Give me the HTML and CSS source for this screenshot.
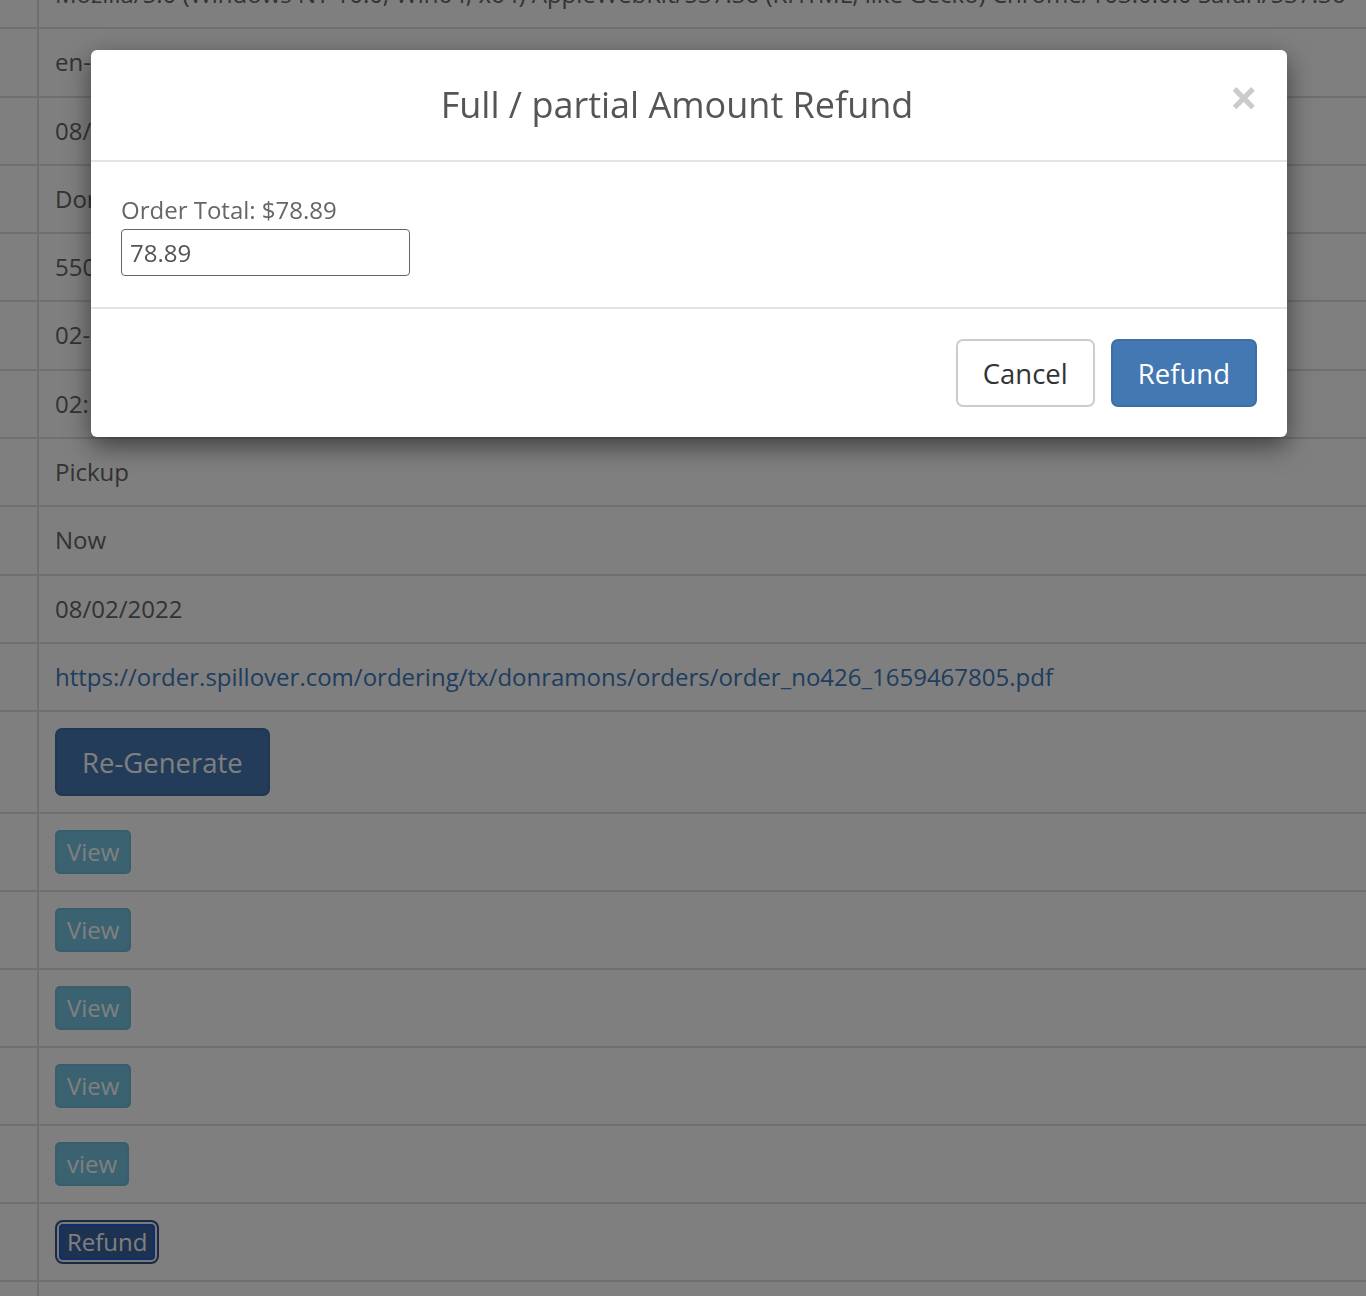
FILE: index.html
```html
<!DOCTYPE html>
<html lang="en">
  <head>
    <meta charset="UTF-8" />
    <meta name="viewport" content="width=device-width, initial-scale=1.0" />
    <title>Order Details</title>
    <link rel="stylesheet" href="styles.css">
  </head>
  <body>
    <div class="details">
      <div class="row"><div class="key"></div><div class="val nowrap">Mozilla/5.0 (Windows NT 10.0; Win64; x64) AppleWebKit/537.36 (KHTML, like Gecko) Chrome/103.0.0.0 Safari/537.36</div></div>
      <div class="row"><div class="key"></div><div class="val">en-US</div></div>
      <div class="row"><div class="key"></div><div class="val">08/02/2022 02:16 PM</div></div>
      <div class="row"><div class="key"></div><div class="val">Don Ramon's Mexican Restaurant</div></div>
      <div class="row"><div class="key"></div><div class="val">5501 Main St</div></div>
      <div class="row"><div class="key"></div><div class="val">02-08-2022</div></div>
      <div class="row"><div class="key"></div><div class="val">02:16 PM</div></div>
      <div class="row"><div class="key"></div><div class="val">Pickup</div></div>
      <div class="row"><div class="key"></div><div class="val">Now</div></div>
      <div class="row"><div class="key"></div><div class="val">08/02/2022</div></div>
      <div class="row"><div class="key"></div><div class="val"><a href="#">https://order.spillover.com/ordering/tx/donramons/orders/order_no426_1659467805.pdf</a></div></div>
      <div class="row"><div class="key"></div><div class="val"><button class="btn btn-primary btn-lg">Re-Generate</button></div></div>
      <div class="row"><div class="key"></div><div class="val"><button class="btn btn-info">View</button></div></div>
      <div class="row"><div class="key"></div><div class="val"><button class="btn btn-info">View</button></div></div>
      <div class="row"><div class="key"></div><div class="val"><button class="btn btn-info">View</button></div></div>
      <div class="row"><div class="key"></div><div class="val"><button class="btn btn-info">View</button></div></div>
      <div class="row"><div class="key"></div><div class="val"><button class="btn btn-info">view</button></div></div>
      <div class="row"><div class="key"></div><div class="val"><button class="btn btn-refund">Refund</button></div></div>
      <div class="row"><div class="key"></div><div class="val">&nbsp;</div></div>
    </div>

    <div class="backdrop"></div>

    <div class="modal">
      <div class="modal-header">
        <button class="close">&times;</button>
        <h4 class="modal-title">Full / partial Amount Refund</h4>
      </div>
      <div class="modal-body">
        <label for="refundAmount">Order Total: $78.89</label>
        <input id="refundAmount" type="text" value="78.89" />
      </div>
      <div class="modal-footer">
        <button class="btn btn-default btn-lg">Cancel</button>
        <button class="btn btn-primary btn-lg">Refund</button>
      </div>
    </div>
  </body>
</html>
```

FILE: styles.css
```css
body {
  margin: 0;
  font-family: "Open Sans", Arial, sans-serif;
  font-size: 24px;
  color: #666;
  background-color: #fff;
  overflow: hidden;
}
.details {
  margin-top: -39px;
}
.row {
  display: grid;
  grid-template-columns: 39px 1fr;
  border-bottom: 2px solid #dedede;
}
.key {
  border-right: 2px solid #dedede;
}
.val {
  padding: 16px;
  line-height: 34.3px;
}
.nowrap {
  white-space: nowrap;
  overflow: hidden;
}
a {
  color: #3e7abc;
  text-decoration: none;
}
.btn {
  font-family: "Open Sans", Arial, sans-serif;
  border: 2px solid transparent;
  border-radius: 6px;
  cursor: pointer;
  display: inline-block;
  vertical-align: middle;
}
.btn-lg {
  font-size: 27.5px;
  height: 68px;
  padding: 0 25px;
  border-radius: 7px;
}
.btn-primary {
  color: #fff;
  background-color: #4478b2;
  border-color: #3e6ea6;
}
.btn-default {
  color: #333;
  background-color: #fff;
  border-color: #ccc;
}
.btn-info {
  color: #fff;
  font-size: 24px;
  height: 44px;
  line-height: 36px;
  padding: 2px 10px;
  background-color: #74c4e0;
  border-color: #70bcd8;
  border-radius: 5px;
}
.btn-refund {
  color: #fff;
  font-size: 24px;
  height: 36px;
  line-height: 32px;
  padding: 0 6px;
  margin: 4px;
  background-color: #3a62a2;
  border-color: #1e5fd8;
  border-radius: 4px;
  box-shadow: 0 0 0 2px #f4f4f4, 0 0 0 4px #38547e;
}
.backdrop {
  position: fixed;
  inset: 0;
  background-color: rgba(0, 0, 0, 0.5);
}
.modal {
  position: fixed;
  top: 50px;
  left: 91px;
  width: 1196px;
  background-color: #fff;
  border-radius: 6px;
  box-shadow: 0 9px 26px rgba(0, 0, 0, 0.5);
}
.modal-header {
  position: relative;
  padding: 35px 30px;
  border-bottom: 2px solid #e5e5e5;
  text-align: center;
}
.modal-title {
  margin: 0 24px 0 0;
  font-size: 36px;
  font-weight: normal;
  line-height: 40px;
  color: #555;
}
.close {
  position: absolute;
  top: 22px;
  right: 29px;
  padding: 0;
  border: none;
  background: none;
  font-family: "Open Sans", Arial, sans-serif;
  font-size: 50px;
  font-weight: bold;
  line-height: 50px;
  color: #000;
  opacity: 0.2;
}
.modal-body {
  padding: 31px 30px;
  display: flex;
  flex-direction: column;
  align-items: flex-start;
}
.modal-body label {
  line-height: 34px;
  color: #666;
}
.modal-body input {
  margin-top: 2px;
  width: 289px;
  height: 47px;
  box-sizing: border-box;
  padding: 0 8px;
  border: 1px solid #666;
  border-radius: 4px;
  font-family: "Open Sans", Arial, sans-serif;
  font-size: 24px;
  color: #555;
}
.modal-footer {
  display: flex;
  justify-content: flex-end;
  gap: 16px;
  padding: 30px;
  border-top: 2px solid #e5e5e5;
}
```
